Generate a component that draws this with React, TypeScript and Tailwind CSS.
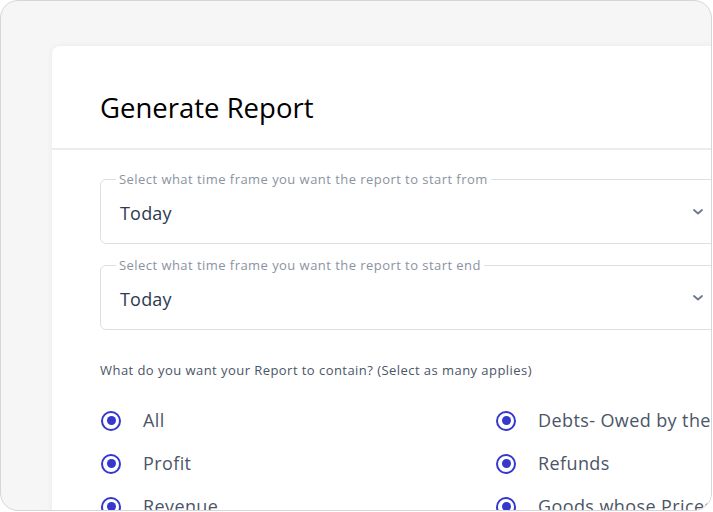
import React from 'react';

const font = { fontFamily: '"Open Sans", "Noto Sans", sans-serif' };

function Chevron() {
  return (
    <svg width="10" height="6" viewBox="0 0 10 6" className="text-[#6b7890]">
      <path d="M1 1l4 3.5L9 1" fill="none" stroke="currentColor" strokeWidth="1.8" strokeLinecap="round" strokeLinejoin="round" />
    </svg>
  );
}

function SelectField({ label }: { label: string }) {
  return (
    <div className="relative w-[620px] h-[65px] border border-[#dcdfe4] rounded-md flex items-center justify-between pl-[19px] pr-[16px]">
      <span className="absolute -top-[9px] left-[15px] bg-white px-[3px] text-[13px] tracking-[0.45px] leading-[16px] text-[#8b93a1]">{label}</span>
      <span className="text-[18px] tracking-[0.2px] text-[#2d3a4f] pt-[4px]">Today</span>
      <Chevron />
    </div>
  );
}

function Radio({ label }: { label: string }) {
  return (
    <div className="flex items-center h-[43px] gap-[22px] pl-[1px] whitespace-nowrap">
      <span className="w-[20px] h-[20px] rounded-full border-[2.5px] border-[#3538cd] flex items-center justify-center shrink-0">
        <span className="w-[9px] h-[9px] rounded-full bg-[#3538cd]" />
      </span>
      <span className="text-[18px] tracking-[0.4px] text-[#4b5567]">{label}</span>
    </div>
  );
}

export default function App() {
  return (
    <div className="w-[713px] h-[512px] bg-white" style={font}>
      <div className="w-[712px] h-[511px] border-[1.5px] border-[#d6d6d8] rounded-[18px] bg-[#f6f6f7] overflow-hidden pl-[51px] pt-[45px]">
        <div className="w-[760px] h-[600px] bg-white rounded-tl-lg shadow-[0_0_6px_rgba(0,0,0,0.06)]">
          <div className="h-[104px] flex items-center px-12 pt-[21px] border-b-2 border-[#ebebf0]">
            <h1 className="text-[27.5px] text-black">Generate Report</h1>
          </div>
          <div className="px-12 pt-[29px]">
            <div className="flex flex-col gap-[21px]">
              <SelectField label="Select what time frame you want the report to start from" />
              <SelectField label="Select what time frame you want the report to start end" />
            </div>
            <p className="mt-[31px] text-[13px] tracking-[0.45px] leading-[18px] text-[#4b5567]">What do you want your Report to contain? (Select as many applies)</p>
            <div className="mt-[20px] grid grid-cols-[395px_1fr]">
              <div className="flex flex-col">
                <Radio label="All" />
                <Radio label="Profit" />
                <Radio label="Revenue" />
              </div>
              <div className="flex flex-col">
                <Radio label="Debts- Owed by the customers" />
                <Radio label="Refunds" />
                <Radio label="Goods whose Prices changed" />
              </div>
            </div>
          </div>
        </div>
      </div>
    </div>
  );
}
